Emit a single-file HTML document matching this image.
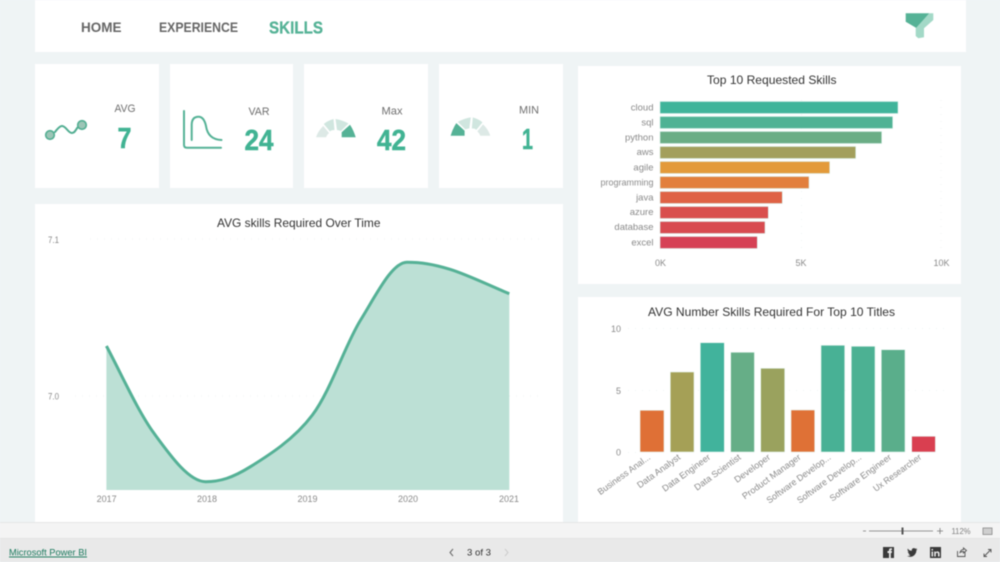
<!DOCTYPE html>
<html><head><meta charset="utf-8"><title>Skills</title>
<style>
html,body{margin:0;padding:0;width:1000px;height:562px;overflow:hidden;background:#eff4f5}
svg{display:block;position:absolute;left:0;top:0;filter:blur(.45px);font-family:"Liberation Sans",sans-serif}
.t{font-size:12px;fill:#333}
.a{font-size:9px;fill:#8a8a8a}
.b{font-size:9.5px;fill:#8a8a8a}
.k{font-size:11px;fill:#6e6e6e}
.v{font-size:29px;font-weight:bold;fill:#41b393;stroke:#41b393;stroke-width:.5}
.n{font-size:14px;font-weight:bold;fill:#666}
.g{stroke:#f0f3f3;stroke-width:1;stroke-dasharray:1 6;fill:none}
</style></head><body>
<svg width="1000" height="562" viewBox="0 0 1000 562" xmlns="http://www.w3.org/2000/svg">
<rect width="1000" height="562" fill="#eff4f5"/>
<!-- header -->
<rect x="35" y="0" width="931" height="52" fill="#fff"/>
<text x="81" y="32" class="n" textLength="40.5" lengthAdjust="spacingAndGlyphs">HOME</text>
<text x="159" y="32" class="n" textLength="79" lengthAdjust="spacingAndGlyphs">EXPERIENCE</text>
<text x="269" y="33.500" font-size="17.500" font-weight="bold" fill="#55b296" stroke="#55b296" stroke-width=".3" textLength="54" lengthAdjust="spacingAndGlyphs">SKILLS</text>
<path d="M905.7 13.3H929.3L916.7 28.3 913 26 905.7 21.7Z" fill="#55b296"/>
<path d="M929.3 13.3H933.3V20L924 28.3V37.3L918.3 38.3 915.7 36V28.3Z" fill="#a3d9c7"/>
<!-- KPI cards -->
<rect x="35" y="64" width="124" height="124" fill="#fff"/>
<rect x="170" y="64" width="123" height="124" fill="#fff"/>
<rect x="304" y="64" width="124" height="124" fill="#fff"/>
<rect x="439" y="64" width="124" height="124" fill="#fff"/>
<text x="114.5" y="112" class="k" textLength="21" lengthAdjust="spacingAndGlyphs">AVG</text>
<text x="117.5" y="148" class="v" textLength="14" lengthAdjust="spacingAndGlyphs">7</text>
<text x="248.5" y="115" class="k" textLength="21" lengthAdjust="spacingAndGlyphs">VAR</text>
<text x="244.5" y="150" class="v" textLength="29" lengthAdjust="spacingAndGlyphs">24</text>
<text x="381.5" y="114.5" class="k" textLength="21" lengthAdjust="spacingAndGlyphs">Max</text>
<text x="377" y="150" class="v" textLength="29" lengthAdjust="spacingAndGlyphs">42</text>
<text x="519" y="113.5" class="k" textLength="20" lengthAdjust="spacingAndGlyphs">MIN</text>
<text x="522" y="149" class="v" textLength="11" lengthAdjust="spacingAndGlyphs">1</text>
<!-- AVG icon -->
<path d="M55 132C58 128 60 126 62 126C66 126 68 133 72 133C75 133 76 129 78 127" fill="none" stroke="#52ae92" stroke-width="2" stroke-linecap="round"/>
<circle cx="50" cy="135" r="4.3" fill="#9cc5b6" stroke="#52ae92" stroke-width="1.6"/>
<circle cx="82" cy="125" r="4.3" fill="#9cc5b6" stroke="#52ae92" stroke-width="1.6"/>
<!-- VAR icon -->
<path d="M184 111V145Q184 147.7 187 147.7H221" fill="none" stroke="#55b296" stroke-width="2" stroke-linecap="round"/>
<path d="M191.7 140V125Q191.7 116.7 198.5 116.7Q204 116.7 206 126Q208 139.5 221.5 140" fill="none" stroke="#55b296" stroke-width="2" stroke-linecap="round"/>
<!-- Gauges -->
<g>
<path d="M316 137.3Q318 131 323.3 126L329 133Q326.7 135 326 137.3Z" fill="#dde9e6"/>
<path d="M323.8 124Q327 121 333.5 119L334.5 130Q331 130 330 131.5Z" fill="#d0e6df"/>
<path d="M335.5 119Q342 120 348.5 123.5L341 131Q338 130 337 130Z" fill="#d0e6df"/>
<path d="M341.7 137.3H355.7Q353.5 130 350 124.7L341.7 132.3Z" fill="#55b296"/>
</g>
<g transform="translate(806.3,-1.6) scale(-1,1)">
<path d="M316 137.3Q318 131 323.3 126L329 133Q326.7 135 326 137.3Z" fill="#dde9e6"/>
<path d="M323.8 124Q327 121 333.5 119L334.5 130Q331 130 330 131.5Z" fill="#d0e6df"/>
<path d="M335.5 119Q342 120 348.5 123.5L341 131Q338 130 337 130Z" fill="#d0e6df"/>
<path d="M341.7 137.3H355.7Q353.5 130 350 124.7L341.7 132.3Z" fill="#55b296"/>
</g>
<!-- Line chart -->
<rect x="35" y="204" width="528" height="318" fill="#fff"/>
<text x="217" y="227" class="t" textLength="163.5" lengthAdjust="spacingAndGlyphs">AVG skills Required Over Time</text>
<path class="g" d="M90 239H540M75 396H540"/>
<text x="48" y="243" class="a" textLength="11" lengthAdjust="spacingAndGlyphs">7.1</text>
<text x="48" y="399.5" class="a" textLength="11" lengthAdjust="spacingAndGlyphs">7.0</text>
<path d="M106.4 346C120.400 372 137.500 410.700 154 433.300C170.500 455.900 189 481.700 205.600 481.700C220 481.700 232.600 477.800 250.400 466.700C268.200 455.600 294 439.500 312.400 415C330.800 390.500 344.800 345.500 360.600 320C376.400 294.500 392 262.300 407 262.300C421 262.300 433 264.100 450 269.300C467 274.500 490 285.700 509.300 293.700V490H106.400Z" fill="#bce0d5"/>
<path d="M106.4 346C120.400 372 137.500 410.700 154 433.300C170.500 455.900 189 481.700 205.600 481.700C220 481.700 232.600 477.800 250.400 466.700C268.200 455.600 294 439.500 312.400 415C330.800 390.500 344.800 345.500 360.600 320C376.400 294.500 392 262.300 407 262.300C421 262.300 433 264.100 450 269.300C467 274.500 490 285.700 509.300 293.700" fill="none" stroke="#55b196" stroke-width="3"/>
<g class="a" text-anchor="middle">
<text x="106.6" y="502">2017</text><text x="207" y="502">2018</text><text x="307.5" y="502">2019</text><text x="408" y="502">2020</text><text x="509" y="502">2021</text>
</g>
<!-- Top bars -->
<rect x="578" y="66" width="383" height="218" fill="#fff"/>
<text x="707" y="84" class="t" textLength="129.5" lengthAdjust="spacingAndGlyphs">Top 10 Requested Skills</text>
<path class="g" d="M801.5 100V250M941 100V250"/>
<g stroke="#d8efe8" stroke-width=".6">
<rect x="660" y="101.5" width="238" height="12" fill="#40b49a"/>
<rect x="660" y="116.5" width="232.7" height="12" fill="#4fb294"/>
<rect x="660" y="131.5" width="221.7" height="12" fill="#6aad85"/>
<rect x="660" y="146.5" width="195.7" height="12" fill="#a39f5c"/>
<rect x="660" y="161.5" width="169.7" height="12" fill="#e39a3a"/>
<rect x="660" y="176.5" width="149" height="12" fill="#e27f3c"/>
<rect x="660" y="191.5" width="122.3" height="12" fill="#df6245"/>
<rect x="660" y="206.5" width="108.3" height="12" fill="#d94f4d"/>
<rect x="660" y="221.5" width="105" height="12" fill="#d84b50"/>
<rect x="660" y="236.5" width="97.3" height="12" fill="#d64155"/>
</g>
<g class="b" text-anchor="end">
<text x="653.5" y="110.5">cloud</text><text x="653.5" y="125.5">sql</text><text x="653.5" y="140.5">python</text><text x="653.5" y="155">aws</text><text x="653.5" y="170.5">agile</text><text x="653.5" y="185.5" textLength="53" lengthAdjust="spacingAndGlyphs">programming</text><text x="653.5" y="200.5">java</text><text x="653.5" y="215">azure</text><text x="653.5" y="230">database</text><text x="653.5" y="245.5">excel</text>
</g>
<g class="a" text-anchor="middle">
<text x="660.5" y="266">0K</text><text x="801" y="266">5K</text><text x="941.5" y="266">10K</text>
</g>
<!-- Bottom chart -->
<rect x="578" y="297" width="383" height="225" fill="#fff"/>
<text x="648" y="316" class="t" textLength="247" lengthAdjust="spacingAndGlyphs">AVG Number Skills Required For Top 10 Titles</text>
<path class="g" d="M628 328.500H945M628 390.500H945M628 452.500H640"/>
<g class="a" text-anchor="end">
<text x="621" y="332">10</text><text x="621" y="394">5</text><text x="621" y="455.500">0</text>
</g>
<g stroke="#e4f3ee" stroke-width=".6">
<rect x="640" y="410.300" width="24" height="41.700" fill="#df7036"/>
<rect x="670.300" y="372" width="23.700" height="80" fill="#a5a056"/>
<rect x="700.300" y="342.700" width="24" height="109.300" fill="#41b39c"/>
<rect x="730.700" y="352.300" width="23.700" height="99.700" fill="#66ae87"/>
<rect x="760.700" y="368.300" width="24" height="83.700" fill="#9aa25e"/>
<rect x="791" y="410" width="23.700" height="42" fill="#df7136"/>
<rect x="821" y="345.300" width="23.700" height="106.700" fill="#48b195"/>
<rect x="851.300" y="346.300" width="23.700" height="105.700" fill="#4cb193"/>
<rect x="881.300" y="349.700" width="23.700" height="102.300" fill="#5aae8b"/>
<rect x="911.700" y="436.300" width="23.700" height="15.700" fill="#d93f50"/>
</g>
<g class="a" text-anchor="end">
<text transform="translate(651,458.500) rotate(-36)" textLength="62.500" lengthAdjust="spacingAndGlyphs">Business Anal...</text>
<text transform="translate(681,458.500) rotate(-36)" textLength="51" lengthAdjust="spacingAndGlyphs">Data Analyst</text>
<text transform="translate(711,458.500) rotate(-36)" textLength="57" lengthAdjust="spacingAndGlyphs">Data Engineer</text>
<text transform="translate(741.500,458.500) rotate(-36)" textLength="55" lengthAdjust="spacingAndGlyphs">Data Scientist</text>
<text transform="translate(771,458.500) rotate(-36)" textLength="42" lengthAdjust="spacingAndGlyphs">Developer</text>
<text transform="translate(801.500,458.500) rotate(-36)" textLength="70" lengthAdjust="spacingAndGlyphs">Product Manager</text>
<text transform="translate(831.500,458.500) rotate(-36)" textLength="77" lengthAdjust="spacingAndGlyphs">Software Develop...</text>
<text transform="translate(862,458.500) rotate(-36)" textLength="77" lengthAdjust="spacingAndGlyphs">Software Develop...</text>
<text transform="translate(892,458.500) rotate(-36)" textLength="73.700" lengthAdjust="spacingAndGlyphs">Software Engineer</text>
<text transform="translate(922,458.500) rotate(-36)" textLength="57" lengthAdjust="spacingAndGlyphs">Ux Researcher</text>
</g>
<!-- status bar -->
<rect x="0" y="522" width="1000" height="16" fill="#f4f4f4"/>
<rect x="0" y="522" width="1000" height="1" fill="#e6e6e6"/>
<rect x="0" y="538" width="1000" height="24" fill="#e9e9e9"/>
<rect x="0" y="538" width="1000" height="1" fill="#e2e2e2"/>
<path d="M863 531H866M869 531H933M937 531H943M940 528V534" stroke="#777" stroke-width=".8" fill="none"/>
<rect x="901.500" y="527.500" width="2" height="7" fill="#555"/>
<text x="951.500" y="534" font-size="8.500" fill="#808080" textLength="19" lengthAdjust="spacingAndGlyphs">112%</text>
<rect x="983" y="528" width="9" height="6.500" fill="#cfcfcf" stroke="#888" stroke-width=".8"/>
<text x="9" y="555.500" font-size="9.500" fill="#1c7a5e" text-decoration="underline" textLength="78" lengthAdjust="spacingAndGlyphs">Microsoft Power BI</text>
<path d="M453 549L450 552.500 453 556" fill="none" stroke="#666" stroke-width="1"/>
<text x="467" y="555.500" font-size="9.500" fill="#333" textLength="24" lengthAdjust="spacingAndGlyphs">3 of 3</text>
<path d="M505 549L508 552.500 505 556" fill="none" stroke="#ccc" stroke-width="1"/>
<!-- social -->
<rect x="883" y="547" width="11" height="11" fill="#3a3a3a"/>
<path d="M889 558V553H887.500V551H889V549.800Q889 548.300 891 548.300H892V550H891.200Q890.800 550 890.800 550.500V551H892L891.800 553H890.800V558Z" fill="#e9e9e9"/>
<path d="M907 556Q911 558 914 555.500Q916.500 553 916.300 550.500L917.500 549.200 916 549.500 917 548.200 915.500 548.800Q914 547.500 912.500 548.500Q911.300 549.500 911.800 550.800Q909 550.800 907.800 548.500Q907 550.500 908.800 552L907.700 551.700Q908 553.300 909.500 553.800L908.500 553.900Q909 555 910.500 555.200Q909 556.200 907 556Z" fill="#3a3a3a"/>
<rect x="930" y="547" width="11" height="11" fill="#3a3a3a"/>
<path d="M931.500 551.500H933V556.500H931.500ZM931.500 549H933V550.500H931.500ZM934.200 551.500H935.700V552.300Q936.400 551.300 937.600 551.400Q939.600 551.500 939.600 553.800V556.500H938V554Q938 552.800 937 552.800Q935.800 552.800 935.800 554V556.500H934.200Z" fill="#e9e9e9"/>
<path d="M957.500 551V556.500H965V551.500M960 552.500Q961 549.500 963.500 549.500V548L966.500 550.500 963.500 553V551.500Q961.500 551.500 960 552.500Z" fill="none" stroke="#555" stroke-width=".9"/>
<path d="M984 556.500L991 549.500M984 553.500V556.500H987M988 549.500H991V552.500" fill="none" stroke="#555" stroke-width=".9"/>
</svg>
</body></html>
